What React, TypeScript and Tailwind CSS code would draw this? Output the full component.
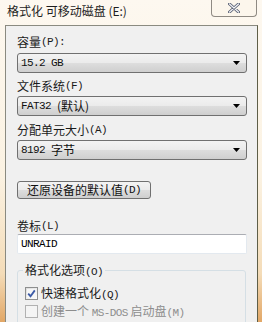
import React from "react";

const cjk = '"Noto Sans CJK SC", "Noto Sans", sans-serif';
const mono = '"Liberation Mono", "Noto Sans CJK SC", monospace';

function Lat({ children }: { children: React.ReactNode }) {
  return (
    <span className="text-[11px] tracking-[-0.6px]" style={{ fontFamily: mono }}>
      {children}
    </span>
  );
}

function Combo({ children }: { children: React.ReactNode }) {
  return (
    <div className="h-[20px] w-full rounded-[3px] border border-[#707070] bg-[linear-gradient(180deg,#f3f3f3_0%,#ebebeb_48%,#dddddd_52%,#cfcfcf_100%)] flex items-center pl-[3px] pr-[6px] text-[12px] text-[#101010] leading-none">
      <div className="flex-1 flex items-center">{children}</div>
      <svg width="7" height="4" viewBox="0 0 7 4">
        <path d="M0 0 H7 L3.5 4 Z" fill="#000" />
      </svg>
    </div>
  );
}

function Label({ children }: { children: React.ReactNode }) {
  return (
    <div className="h-[14px] leading-[14px] text-[12px] text-[#1a1a1a] flex items-center whitespace-nowrap">
      {children}
    </div>
  );
}

export default function App() {
  return (
    <div
      className="w-[262px] h-[322px] overflow-hidden bg-[linear-gradient(180deg,#fdf8f0_0%,#fbf2e2_55%,#f4dcb8_85%,#e2a766_100%)] flex flex-col"
      style={{ fontFamily: cjk }}
    >
      <div className="h-[25px] flex items-start shrink-0">
        <div className="pl-[7px] pt-[3px] text-[12px] leading-[16px] text-[#1e1e1e] whitespace-nowrap">
          格式化 可移动磁盘 (E:)
        </div>
        <div className="ml-auto mr-[5px] w-[46px] h-[17px] border border-t-0 border-[#8f8a83] rounded-b-[4px] bg-[#fcf6ec] flex items-center justify-center">
          <svg width="12" height="10" viewBox="0 0 12 10">
            <path d="M1.5 1 L10.5 9 M10.5 1 L1.5 9" stroke="#5b6275" strokeWidth="3" strokeLinecap="round" />
            <path d="M1.5 1 L10.5 9 M10.5 1 L1.5 9" stroke="#f4f5f8" strokeWidth="1.2" strokeLinecap="round" />
          </svg>
        </div>
      </div>
      <div className="ml-[5px] w-[253px] flex-1 border-l border-t border-r border-l-[#8a8a80] border-t-[#8a8a80] border-r-[#5e5e48] bg-[#f0f0f0] pl-[11px] pr-[10px] pt-[9px] flex flex-col">
        <Label>
          容量<Lat>(P):</Lat>
        </Label>
        <div className="h-[4px]" />
        <Combo>
          <Lat>15.2 GB</Lat>
        </Combo>
        <div className="h-[6px]" />
        <Label>
          文件系统<Lat>(F)</Lat>
        </Label>
        <div className="h-[3px]" />
        <Combo>
          <Lat>FAT32</Lat>
          <span className="ml-[6px]">(默认)</span>
        </Combo>
        <div className="h-[7px]" />
        <Label>
          分配单元大小<Lat>(A)</Lat>
        </Label>
        <div className="h-[3px]" />
        <Combo>
          <Lat>8192</Lat>
          <span className="ml-[6px]">字节</span>
        </Combo>
        <div className="h-[21px]" />
        <div className="w-[134px] h-[18px] rounded-[3px] border border-[#707070] bg-[linear-gradient(180deg,#f3f3f3_0%,#ebebeb_48%,#dddddd_52%,#cfcfcf_100%)] flex items-center justify-center text-[12px] text-[#101010] leading-none whitespace-nowrap">
          还原设备的默认值<Lat>(D)</Lat>
        </div>
        <div className="h-[20px]" />
        <Label>
          卷标<Lat>(L)</Lat>
        </Label>
        <div className="h-[1px]" />
        <div className="h-[20px] w-full border border-[#e3e9ef] border-t-[#abadb3] bg-white flex items-center pl-[3px] rounded-[2px]">
          <Lat>UNRAID</Lat>
        </div>
        <div className="h-[16px]" />
        <div className="relative border border-[#d5dfe5] rounded-[3px] h-[80px] mr-[1px]">
          <div className="absolute -top-[8px] left-[5px] px-[2px] bg-[#f0f0f0] text-[12px] leading-[14px] text-[#1a1a1a] whitespace-nowrap">
            格式化选项<Lat>(O)</Lat>
          </div>
          <div className="pt-[16px] pl-[7px] flex flex-col gap-[5px]">
            <div className="flex items-center gap-[3px] h-[13px]">
              <div className="w-[13px] h-[13px] border border-[#8e8f8f] bg-[linear-gradient(135deg,#dcdcdc,#fdfdfd)] flex items-center justify-center p-[1px]">
                <div className="w-full h-full bg-[#f6f6f6] flex items-center justify-center">
                  <svg width="9" height="9" viewBox="0 0 9 9">
                    <path d="M1.2 4.6 L3.5 7.2 L7.8 1.4" fill="none" stroke="#3b5aa6" strokeWidth="1.8" />
                  </svg>
                </div>
              </div>
              <div className="text-[12px] leading-[14px] text-[#1a1a1a] whitespace-nowrap">
                快速格式化<Lat>(Q)</Lat>
              </div>
            </div>
            <div className="flex items-center gap-[3px] h-[13px]">
              <div className="w-[13px] h-[13px] border border-[#b1b1b1] bg-[#f4f4f4]" />
              <div className="text-[12px] leading-[14px] text-[#8d8d8d] whitespace-nowrap">
                创建一个 <Lat>MS-DOS</Lat> 启动盘<Lat>(M)</Lat>
              </div>
            </div>
          </div>
        </div>
      </div>
    </div>
  );
}
